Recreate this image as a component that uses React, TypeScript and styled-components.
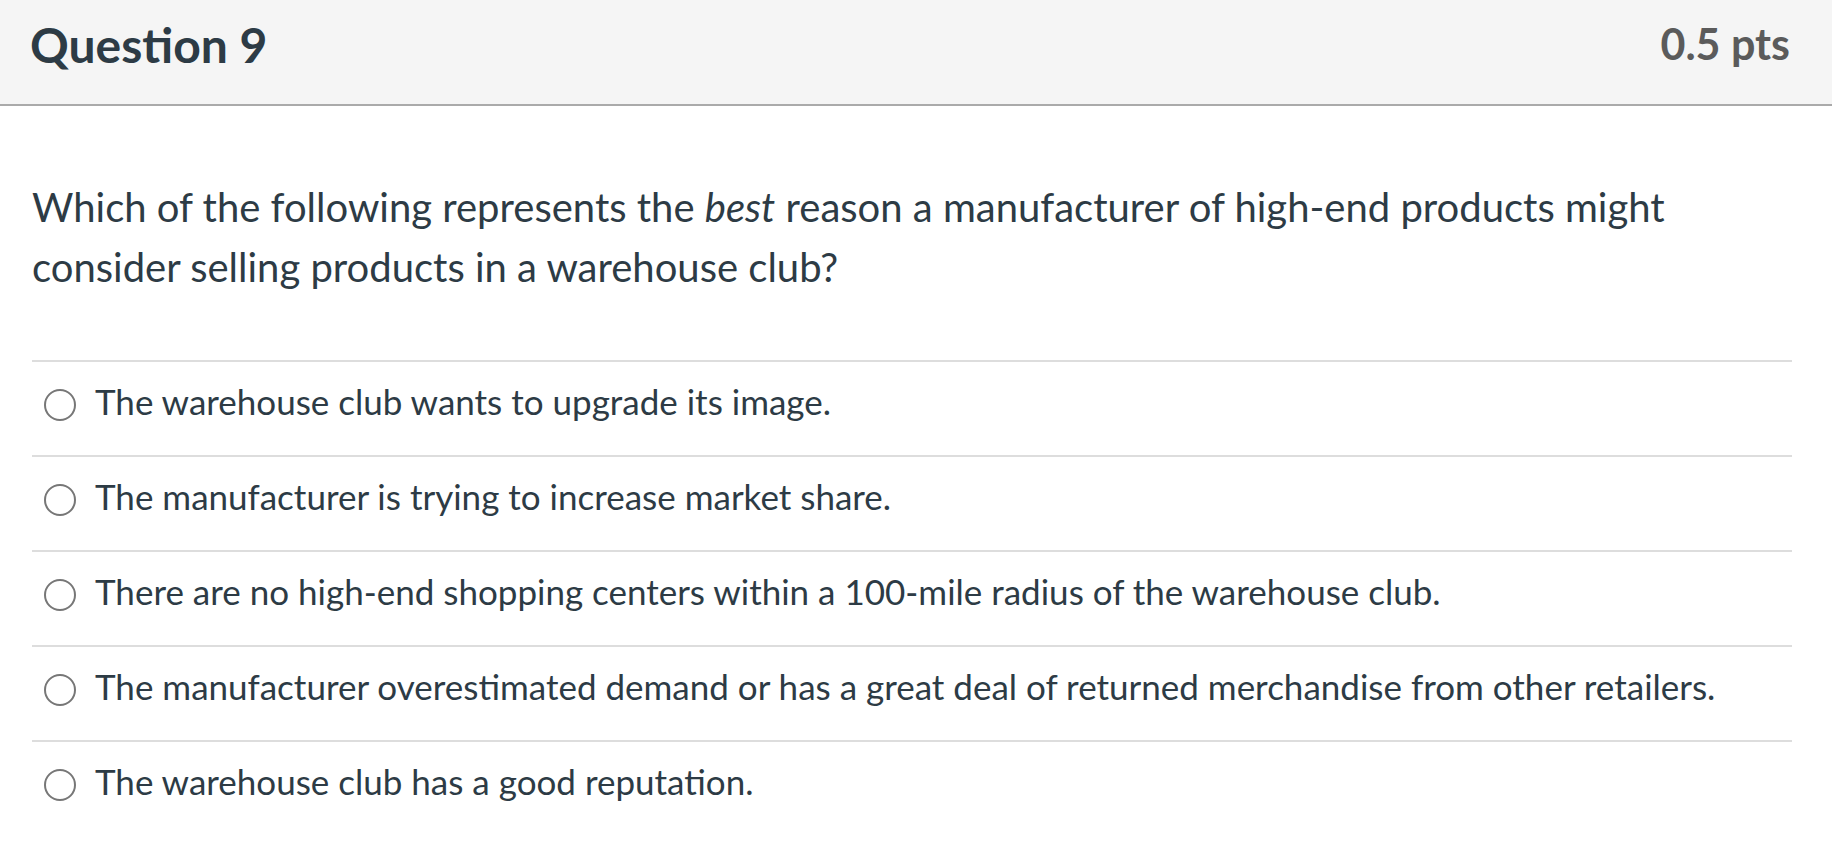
import React from "react";
import styled, { createGlobalStyle } from "styled-components";

const Global = createGlobalStyle`
  html, body { margin: 0; padding: 0; background: #ffffff; }
  body { font-family: Lato, "Noto Sans", sans-serif; color: #2d3b45; }
`;

const Page = styled.div`
  width: 1832px;
  height: 847px;
  overflow: hidden;
  background: #ffffff;
`;

const Header = styled.header`
  display: flex;
  justify-content: space-between;
  align-items: flex-start;
  height: 104px;
  padding: 0 42px 0 30px;
  background: #f5f5f5;
  border-bottom: 2px solid #aaaaaa;
  box-sizing: content-box;
`;

const Title = styled.h2`
  margin: 16px 0 0;
  font-family: Lato, sans-serif;
  font-weight: 700;
  font-size: 48px;
  line-height: 58px;
  color: #2d3b45;
`;

const Points = styled.div`
  margin-top: 19px;
  font-family: Lato, sans-serif;
  font-weight: 700;
  font-size: 43px;
  line-height: 50px;
  color: #5b5b5b;
`;

const Body = styled.div`
  padding: 71px 40px 0 32px;
`;

const QuestionText = styled.p`
  margin: 0 0 63px;
  font-family: Lato, sans-serif;
  font-size: 40px;
  line-height: 60px;
  color: #2d3b45;
`;

const Answers = styled.div`
  display: flex;
  flex-direction: column;
`;

const Row = styled.label`
  display: flex;
  align-items: flex-start;
  height: 95px;
  padding-top: 15px;
  box-sizing: border-box;
  border-top: 2px solid #dddddd;
  cursor: pointer;
`;

const Radio = styled.span`
  flex: none;
  width: 32px;
  height: 32px;
  margin: 12px 19px 0 12px;
  border: 2.5px solid #777777;
  border-radius: 50%;
  box-sizing: border-box;
  background: #ffffff;
`;

const AnswerText = styled.span`
  font-family: Lato, sans-serif;
  font-size: 35px;
  line-height: 48px;
  color: #2d3b45;
`;

const answers = [
  "The warehouse club wants to upgrade its image.",
  "The manufacturer is trying to increase market share.",
  "There are no high-end shopping centers within a 100-mile radius of the warehouse club.",
  "The manufacturer overestimated demand or has a great deal of returned merchandise from other retailers.",
  "The warehouse club has a good reputation.",
];

export default function App() {
  return (
    <Page>
      <Global />
      <Header>
        <Title>Question 9</Title>
        <Points>0.5 pts</Points>
      </Header>
      <Body>
        <QuestionText>
          Which of the following represents the <em>best</em> reason a manufacturer of
          high-end products might consider selling products in a warehouse club?
        </QuestionText>
        <Answers>
          {answers.map((a) => (
            <Row key={a}>
              <Radio />
              <AnswerText>{a}</AnswerText>
            </Row>
          ))}
        </Answers>
      </Body>
    </Page>
  );
}
